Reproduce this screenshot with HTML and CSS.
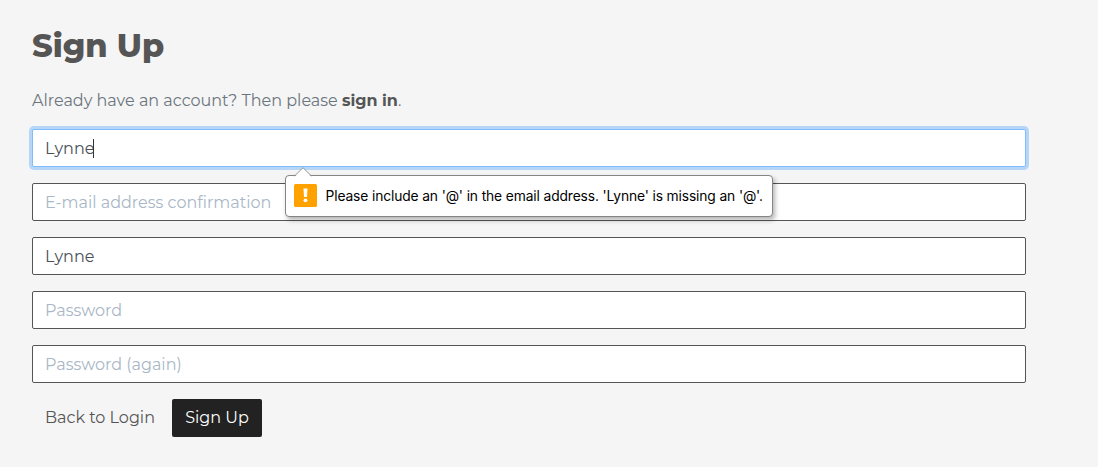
FILE: index.html
```
<!DOCTYPE html>
<html lang="en">
<head>
<meta charset="utf-8">
<title>Sign Up</title>
<link rel="stylesheet" href="styles.css">
</head>
<body>
<main class="signup">
  <h1 class="title">Sign Up</h1>
  <p class="intro">Already have an account? Then please <a class="signin">sign in</a>.</p>
  <form class="form" novalidate>
    <div class="field">
      <input class="input input-active" type="text" value="Lynne" aria-label="E-mail address">
      <span class="caret"></span>
      <div class="tooltip" role="alert">
        <svg class="arrow" width="18" height="10" viewBox="0 0 18 10"><path d="M1 9.500 9 1l8 8.500V10H1z" fill="#fff"/><path d="M.5 9 9 .7 17.500 9" fill="none" stroke="#999"/></svg>
        <svg class="warn" width="23" height="23" viewBox="0 0 23 23"><rect width="23" height="23" rx="1.500" fill="#ffa200"/><path d="M9.500 4.500h4l-.5 8.500h-3z" fill="#fff"/><circle cx="11.500" cy="16.300" r="1.900" fill="#fff"/></svg>
        <span class="message">Please include an '@' in the email address. 'Lynne' is missing an '@'.</span>
      </div>
    </div>
    <input class="input" type="text" placeholder="E-mail address confirmation">
    <input class="input" type="text" value="Lynne" aria-label="Name">
    <input class="input" type="password" placeholder="Password">
    <input class="input" type="password" placeholder="Password (again)">
    <div class="actions">
      <a class="button button-link">Back to Login</a>
      <button class="button button-dark" type="button">Sign Up</button>
    </div>
  </form>
</main>
</body>
</html>
```
FILE: styles.css
```
* { box-sizing: border-box; }
body {
  margin: 0;
  background: #f5f5f5;
  color: #555;
  font: 16px/24px Montserrat, Inter, sans-serif;
}
.signup { width: 1026px; padding: 26px 0 0 32px; }
.title {
  margin: 0 0 24px;
  font-size: 32px;
  line-height: 39px;
  font-weight: 800;
}
.intro { margin: 0 0 16px; color: #6c757d; white-space: nowrap; }
.signin { color: #555; font-weight: 700; }
.form { display: grid; gap: 16px; }
.field { position: relative; height: 38px; }
.input {
  display: block;
  width: 100%;
  height: 38px;
  margin: 0;
  padding: 6px 12px;
  border: 1px solid #555;
  border-radius: 2px;
  outline: 0;
  background: #fff;
  color: #495057;
  font: inherit;
}
.input::placeholder { color: #a9b7c6; opacity: 1; }
.input-active { border-color: #80bdff; box-shadow: 0 0 0 3px #b6d6f8; }
.caret { position: absolute; left: 61px; top: 10px; width: 1px; height: 19px; background: #333; }
.tooltip {
  position: absolute;
  z-index: 1;
  left: 253px;
  top: 46px;
  width: 488px;
  height: 42px;
  display: flex;
  align-items: center;
  gap: 8.5px;
  padding: 0 0 0 8px;
  border: 1px solid #858585;
  border-radius: 4px;
  background: #fff;
  box-shadow: 2px 3px 5px rgba(0, 0, 0, .3);
}
.arrow { position: absolute; left: 8px; top: -9px; }
.warn { flex: none; margin-top: -1px; }
.message {
  color: #000;
  font: 13.8px/18px Inter, sans-serif;
  letter-spacing: -0.12px;
  white-space: nowrap;
}
.actions { display: flex; gap: 4px; }
.button {
  height: 38px;
  padding: 7px 13px;
  border: 0;
  border-radius: 2px;
  font: inherit;
  white-space: nowrap;
}
.button-link { width: 136px; color: #555; }
.button-dark { width: 90px; background: #222; color: #fff; }
```
